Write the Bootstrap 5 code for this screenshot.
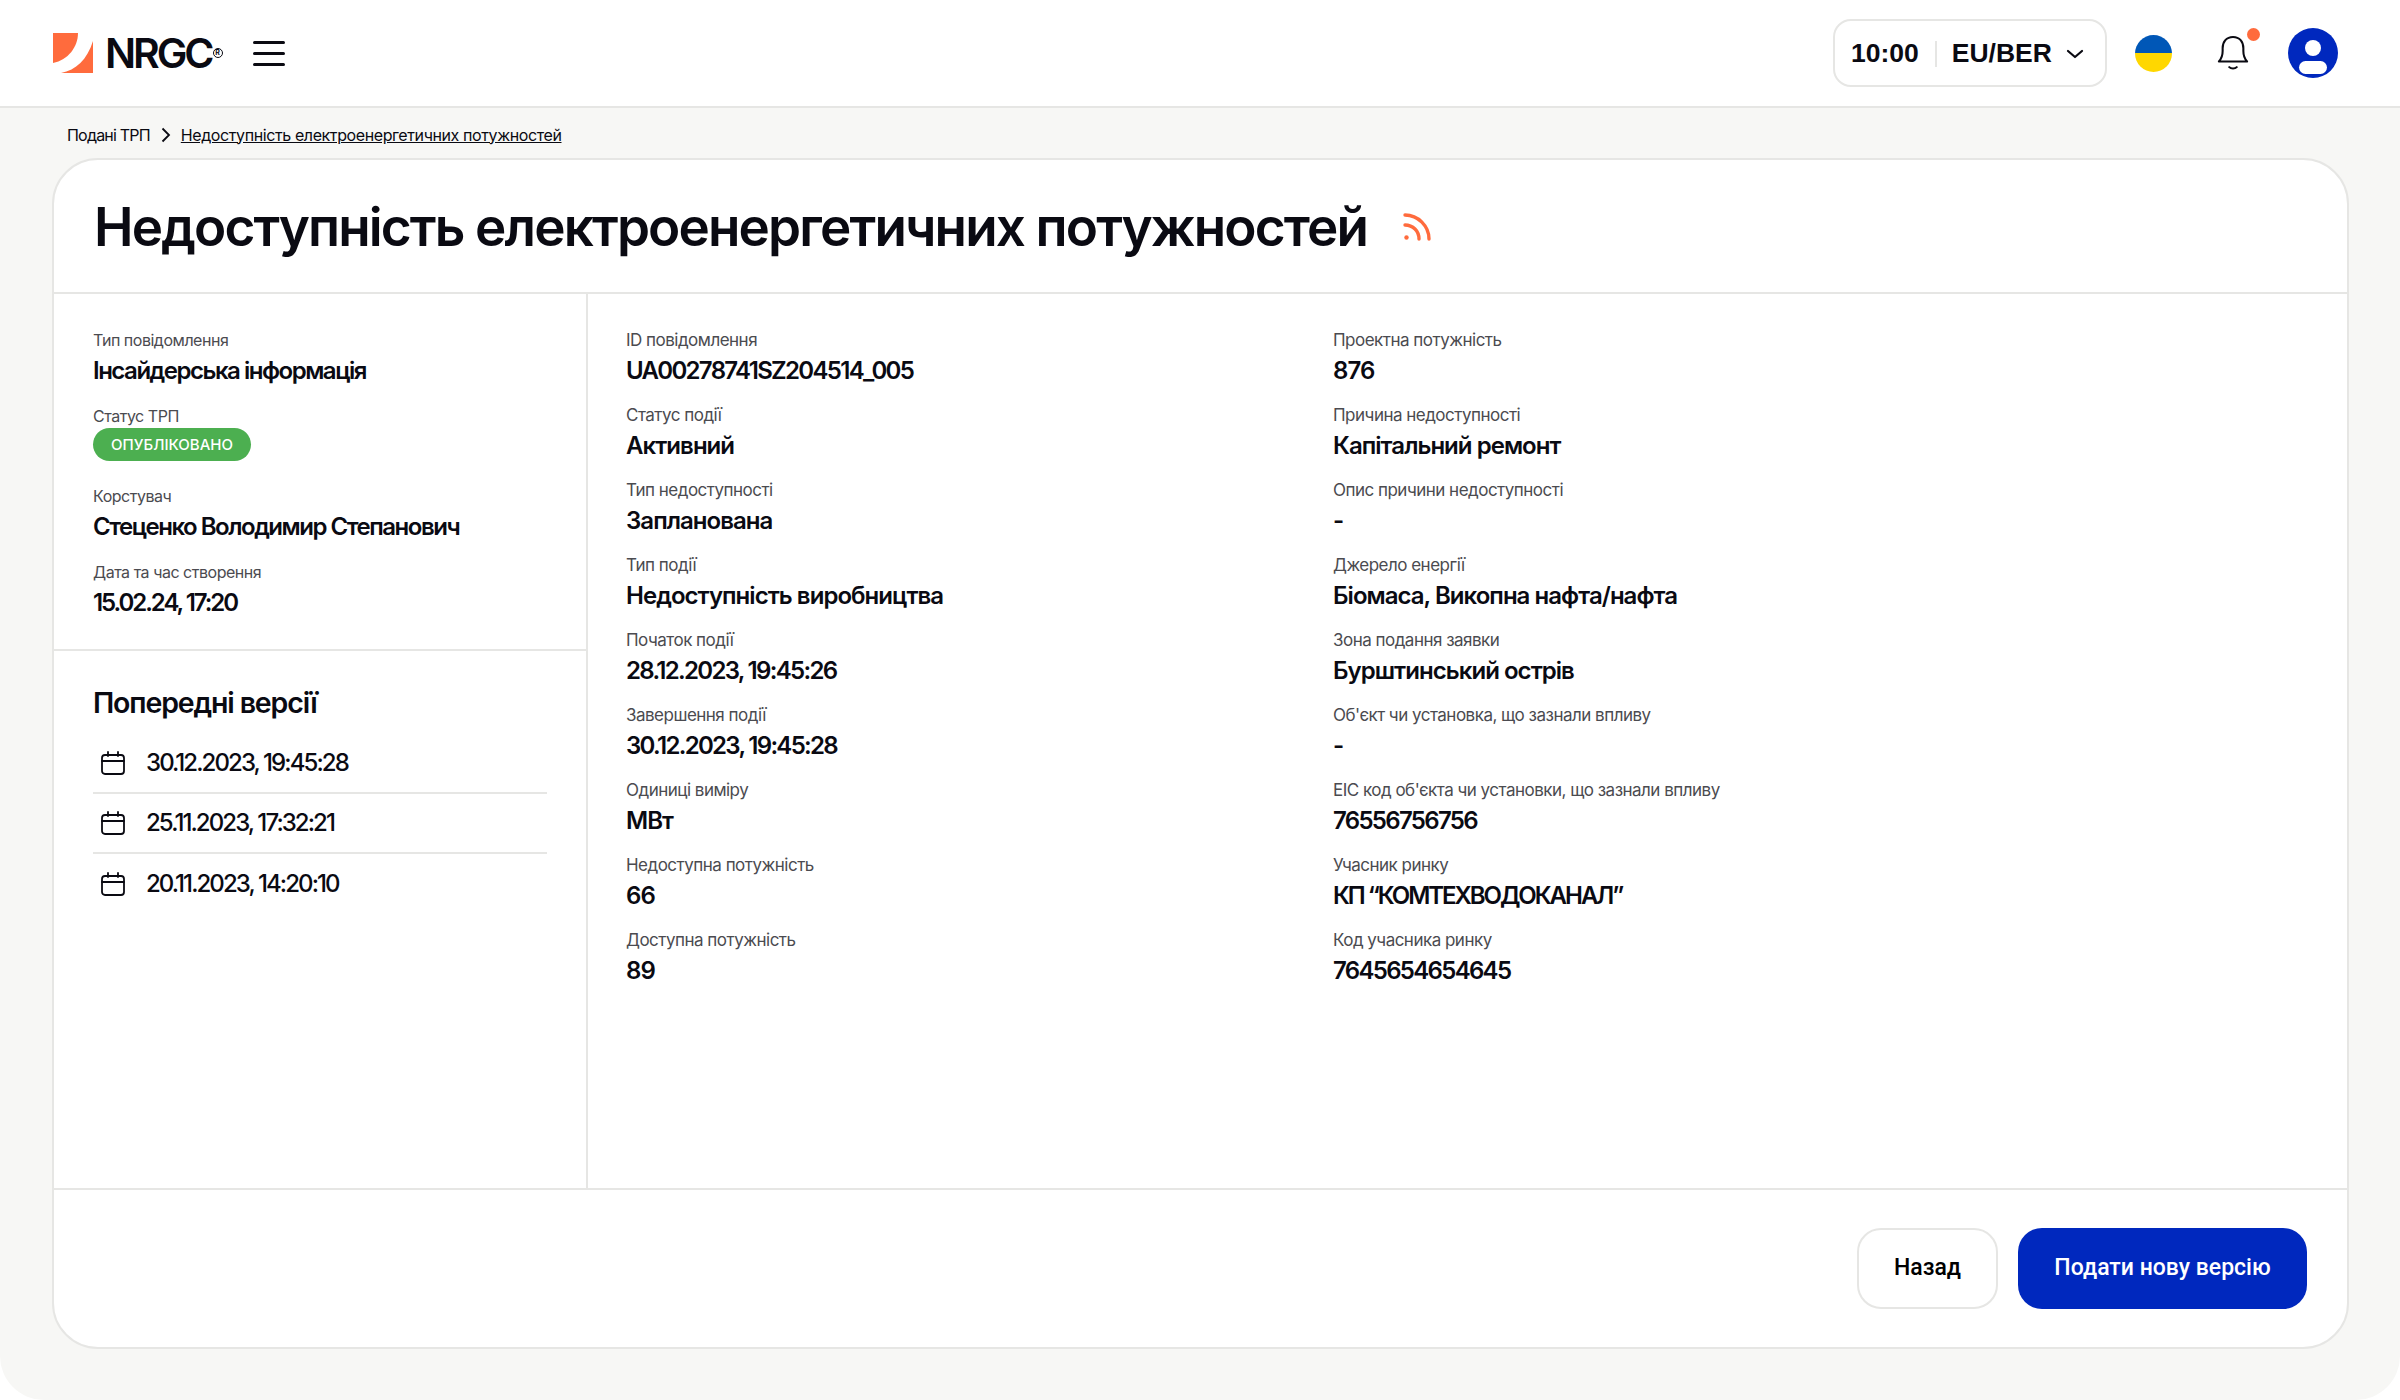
<!doctype html>
<html lang="uk">
<head>
<meta charset="utf-8">
<title>NRGC</title>
<link href="https://cdn.jsdelivr.net/npm/bootstrap@5.3.0/dist/css/bootstrap.min.css" rel="stylesheet">
<style>
html,body{background:#fff;margin:0}
body{font-family:Inter,"Noto Sans",sans-serif;color:#0a0a12;letter-spacing:-.02em}
.frame{width:2400px;height:1400px;background:#f7f7f5;border-radius:0 0 44px 44px;overflow:hidden}
.topbar{height:108px;background:#fff;border-bottom:2px solid #e6e6e4;padding:0 62px 0 53px}
.brand-word{font-size:41px;font-weight:600;letter-spacing:-.075em;line-height:1;margin-left:12px;color:#0a0a12}
.brand-reg{font-size:7px;font-weight:700;border:1.2px solid #0a0a12;border-radius:50%;width:10px;height:10px;letter-spacing:0;margin-left:1px;line-height:8px;text-align:center}
.burger{width:32px;margin-left:30px}
.burger i{display:block;height:3px;background:#0a0a12;border-radius:2px}
.tz-box{width:274px;height:68px;border:2px solid #e6e6e4;border-radius:18px;background:#fff;font-family:"Liberation Sans",sans-serif;font-weight:700;font-size:26.5px;letter-spacing:0;padding:2px 21px 0 16px}
.tz-sep{width:2px;height:26px;background:#e6e6e4;margin:0 15px 0 16px}
.flag-dot{width:37px;height:37px;border-radius:50%;background:linear-gradient(#0057b7 50%,#ffd700 50%);margin-left:28px}
.bell-wrap{width:32px;height:38px;margin-left:45px}
.bell-dot{position:absolute;width:13px;height:13px;border-radius:50%;background:#ff6b3d;top:-6px;right:-11px}
.face{margin-left:39px}
.crumbs{font-size:16px;padding:3px 0 0 67px;height:50px;letter-spacing:-.025em}
.crumbs .breadcrumb-item+.breadcrumb-item::before{content:none}
.crumbs .breadcrumb-item+.breadcrumb-item{padding-left:0}
.crumbs .sep-item{margin:0 10px 0 11px}
.crumbs a{color:#0a0a12}
.crumbs .first{color:#0a0a12;text-decoration:none;letter-spacing:-.05em}
.sheet.card{margin:0 51px 0 52px;height:1191px;border:2px solid #e6e6e4;border-radius:46px;overflow:hidden;--bs-card-bg:#fff}
.sheet-head{height:134px;padding:2px 40px 0;border-bottom:2px solid #e6e6e4;flex:none}
.sheet-title{font-size:53px;font-weight:600;line-height:1;margin:0;letter-spacing:-.035em}
.rss{margin-left:36px}
.sheet-body{height:894px;flex:none}
.side{width:534px;border-right:2px solid #e6e6e4;flex:none}
.side-top{padding:35px 39px 30px 39px;border-bottom:2px solid #e6e6e4;height:357px}
.side-top .info dt{font-size:16px}
.side-top .info.status dt{margin-bottom:1px}
.side-bottom{padding:0 39px}
.versions-title{font-size:28.5px;font-weight:600;margin:34px 0 13px;line-height:36px;letter-spacing:-.04em}
.ver.list-group-item{display:flex;align-items:center;gap:21px;height:60px;padding:0 0 0 8px;font-size:24px;font-weight:500;border-color:#e6e6e4;border-width:0 0 2px;color:#0a0a12;letter-spacing:-.08em}
.ver.list-group-item:last-child{border-bottom:0}
.info{margin-bottom:15px}
.info dt{font-size:17px;font-weight:400;line-height:22px;color:#4b4b50;margin:0 0 2px;letter-spacing:-.03em}
.info dd{font-size:24px;font-weight:600;line-height:36px;margin:0;letter-spacing:-.04em}
.info dd.fit-a{letter-spacing:-.07em}
.info dd.fit-b{letter-spacing:-.085em}
.info dd.fit-c{letter-spacing:-.062em}
.pill.badge{display:block;width:158px;height:33px;line-height:33px;padding:0;background:#4caf50;font-size:15px;font-weight:500;letter-spacing:0;border-radius:17px;margin-bottom:24px;text-align:center}
.info.status{margin-bottom:0}
.main{padding:35px 0 0 38px}
.col-left{width:707px;flex:none}
.sheet-foot{flex:1;border-top:2px solid #e6e6e4;padding:38px 40px 0 0;gap:20px}
.act{height:81px;border-radius:24px;font-family:Roboto,sans-serif;font-weight:500;font-size:23px;letter-spacing:0;display:flex;align-items:center;justify-content:center}
.act-back{width:141px;background:#fff;border:2px solid #e6e6e4;color:#000}
.act-send{width:289px;background:#0028be;border:0;color:#fff}
</style>
</head>
<body>
<div class="frame d-flex flex-column">
  <nav class="navbar topbar d-flex align-items-center flex-nowrap justify-content-start">
    <svg width="40" height="40" viewBox="0 0 40 40" aria-hidden="true"><path fill="#ff6b3d" d="M0 0H25C25 14 15 27 0 30Z"/><path fill="#ff6b3d" d="M40 8V40H8C23 37 34 27 40 8Z"/></svg>
    <span class="brand-word">NRGC</span><span class="brand-reg">R</span>
    <span class="burger d-flex flex-column gap-2"><i></i><i></i><i></i></span>
    <div class="ms-auto d-flex align-items-center">
      <div class="tz-box d-flex align-items-center">
        <span>10:00</span><span class="tz-sep"></span><span>EU/BER</span>
        <svg class="ms-auto" width="18" height="10" viewBox="0 0 18 10" fill="none" stroke="#0a0a12" stroke-width="2.2" stroke-linecap="round" stroke-linejoin="round"><path d="M2 2l7 6 7-6"/></svg>
      </div>
      <span class="flag-dot"></span>
      <span class="bell-wrap position-relative">
        <svg class="d-block" width="32" height="38" viewBox="0 0 34 40" fill="none" stroke="#0a0a12" stroke-width="2.2" stroke-linecap="round" stroke-linejoin="round"><path d="M2 29c3-3 4-6 4-11V15C6 8 10 3 17 3s11 5 11 12v3c0 5 1 8 4 11z"/><path d="M13 35c2 2 6 2 8 0"/></svg>
        <span class="bell-dot"></span>
      </span>
      <svg class="face" width="50" height="50" viewBox="0 0 50 50"><defs><clipPath id="av"><circle cx="25" cy="25" r="25"/></clipPath></defs><circle cx="25" cy="25" r="25" fill="#0028be"/><g clip-path="url(#av)" fill="#fff"><circle cx="25" cy="20" r="8"/><rect x="11" y="33" width="28" height="13" rx="6.5"/></g></svg>
    </div>
  </nav>

  <nav class="crumbs d-flex align-items-center" aria-label="breadcrumb">
    <ol class="breadcrumb m-0 align-items-center flex-nowrap">
      <li class="breadcrumb-item first">Подані ТРП</li>
      <li class="breadcrumb-item sep-item"><svg class="d-block" width="10" height="16" viewBox="0 0 10 16" fill="none" stroke="#0a0a12" stroke-width="1.8"><path d="M1.5 1.5L8 8l-6.5 6.5"/></svg></li>
      <li class="breadcrumb-item active"><a href="#">Недоступність електроенергетичних потужностей</a></li>
    </ol>
  </nav>

  <section class="card sheet">
    <header class="sheet-head d-flex align-items-center">
      <h1 class="sheet-title">Недоступність електроенергетичних потужностей</h1>
      <svg class="rss" width="28" height="28" viewBox="0 0 28 28" fill="none" stroke="#ff6b3d" stroke-width="3.4" stroke-linecap="round"><path d="M2 2c13 0 24 11 24 24"/><path d="M2 12c8 0 14 6 14 14"/><circle cx="3.5" cy="24.5" r="2.2" fill="#ff6b3d" stroke="none"/></svg>
    </header>
    <div class="sheet-body d-flex">
      <aside class="side">
        <div class="side-top">
          <dl class="info m-0 mb-3"><dt>Тип повідомлення</dt><dd class="fit-c">Інсайдерська інформація</dd></dl>
          <dl class="info status m-0"><dt>Статус ТРП</dt><dd class="m-0"><span class="badge pill">ОПУБЛІКОВАНО</span></dd></dl>
          <dl class="info m-0 mb-3"><dt>Корстувач</dt><dd class="fit-c">Стеценко Володимир Степанович</dd></dl>
          <dl class="info m-0"><dt>Дата та час створення</dt><dd class="fit-b">15.02.24, 17:20</dd></dl>
        </div>
        <div class="side-bottom">
          <h2 class="versions-title">Попередні версії</h2>
          <div class="list-group list-group-flush">
            <div class="list-group-item ver"><svg width="24" height="24" viewBox="0 0 24 24" fill="none" stroke="#0a0a12" stroke-width="1.8" stroke-linecap="round"><rect x="1" y="4" width="22" height="19" rx="3"/><path d="M1 10h22M7 1v4M17 1v4"/></svg>30.12.2023, 19:45:28</div>
            <div class="list-group-item ver"><svg width="24" height="24" viewBox="0 0 24 24" fill="none" stroke="#0a0a12" stroke-width="1.8" stroke-linecap="round"><rect x="1" y="4" width="22" height="19" rx="3"/><path d="M1 10h22M7 1v4M17 1v4"/></svg>25.11.2023, 17:32:21</div>
            <div class="list-group-item ver"><svg width="24" height="24" viewBox="0 0 24 24" fill="none" stroke="#0a0a12" stroke-width="1.8" stroke-linecap="round"><rect x="1" y="4" width="22" height="19" rx="3"/><path d="M1 10h22M7 1v4M17 1v4"/></svg>20.11.2023, 14:20:10</div>
          </div>
        </div>
      </aside>
      <div class="main d-flex flex-grow-1">
        <div class="col-left">
          <dl class="info"><dt>ID повідомлення</dt><dd class="fit-a">UA00278741SZ204514_005</dd></dl>
          <dl class="info"><dt>Статус події</dt><dd>Активний</dd></dl>
          <dl class="info"><dt>Тип недоступності</dt><dd>Запланована</dd></dl>
          <dl class="info"><dt>Тип події</dt><dd>Недоступність виробництва</dd></dl>
          <dl class="info"><dt>Початок події</dt><dd class="fit-a">28.12.2023, 19:45:26</dd></dl>
          <dl class="info"><dt>Завершення події</dt><dd class="fit-a">30.12.2023, 19:45:28</dd></dl>
          <dl class="info"><dt>Одиниці виміру</dt><dd>МВт</dd></dl>
          <dl class="info"><dt>Недоступна потужність</dt><dd>66</dd></dl>
          <dl class="info"><dt>Доступна потужність</dt><dd>89</dd></dl>
        </div>
        <div class="flex-grow-1">
          <dl class="info"><dt>Проектна потужність</dt><dd>876</dd></dl>
          <dl class="info"><dt>Причина недоступності</dt><dd>Капітальний ремонт</dd></dl>
          <dl class="info"><dt>Опис причини недоступності</dt><dd>-</dd></dl>
          <dl class="info"><dt>Джерело енергії</dt><dd>Біомаса, Викопна нафта/нафта</dd></dl>
          <dl class="info"><dt>Зона подання заявки</dt><dd>Бурштинський острів</dd></dl>
          <dl class="info"><dt>Об'єкт чи установка, що зазнали впливу</dt><dd>-</dd></dl>
          <dl class="info"><dt>EIC код об'єкта чи установки, що зазнали впливу</dt><dd class="fit-a">76556756756</dd></dl>
          <dl class="info"><dt>Учасник ринку</dt><dd class="fit-b">КП “КОМТЕХВОДОКАНАЛ”</dd></dl>
          <dl class="info"><dt>Код учасника ринку</dt><dd class="fit-a">7645654654645</dd></dl>
        </div>
      </div>
    </div>
    <footer class="sheet-foot d-flex justify-content-end align-items-start">
      <button type="button" class="btn act act-back">Назад</button>
      <button type="button" class="btn act act-send">Подати нову версію</button>
    </footer>
  </section>
</div>
<script src="https://cdn.jsdelivr.net/npm/bootstrap@5.3.0/dist/js/bootstrap.bundle.min.js"></script>
</body>
</html>
